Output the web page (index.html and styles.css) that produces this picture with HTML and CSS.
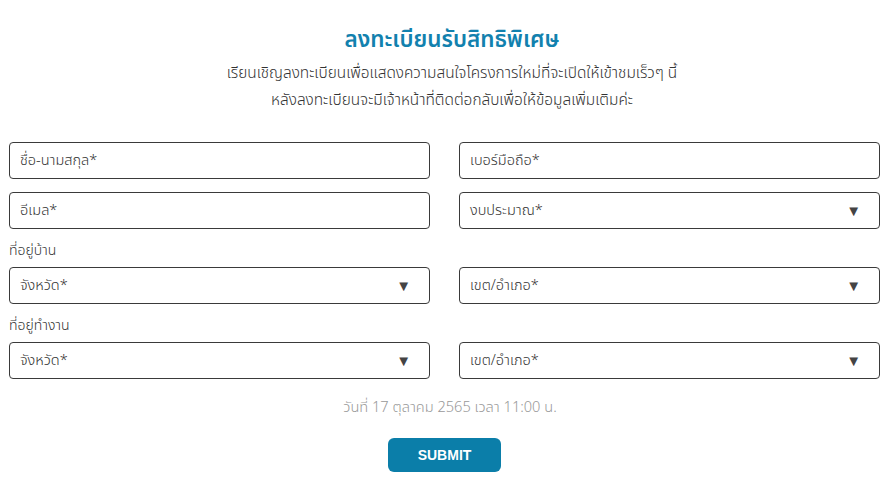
FILE: index.html
```html
<!DOCTYPE html>
<html lang="th">
<head>
  <meta charset="UTF-8">
  <meta name="viewport" content="width=device-width, initial-scale=1.0">
  <title>ลงทะเบียนรับสิทธิพิเศษ</title>
  <link rel="stylesheet" href="styles.css">
</head>
<body>
  <section class="register">
    <header class="head">
      <h1 class="title">ลงทะเบียนรับสิทธิพิเศษ</h1>
      <p class="intro">เรียนเชิญลงทะเบียนเพื่อแสดงความสนใจโครงการใหม่ที่จะเปิดให้เข้าชมเร็วๆ นี้<br>หลังลงทะเบียนจะมีเจ้าหน้าที่ติดต่อกลับเพื่อให้ข้อมูลเพิ่มเติมค่ะ</p>
    </header>

    <form class="form">
      <div class="row">
        <input class="field" type="text" placeholder="ชื่อ-นามสกุล*">
        <input class="field" type="tel" placeholder="เบอร์มือถือ*">
      </div>
      <div class="row">
        <input class="field" type="email" placeholder="อีเมล*">
        <div class="field select">งบประมาณ*<span class="arrow">▼</span></div>
      </div>

      <div class="label">ที่อยู่บ้าน</div>
      <div class="row">
        <div class="field select">จังหวัด*<span class="arrow">▼</span></div>
        <div class="field select">เขต/อำเภอ*<span class="arrow">▼</span></div>
      </div>

      <div class="label">ที่อยู่ทำงาน</div>
      <div class="row">
        <div class="field select">จังหวัด*<span class="arrow">▼</span></div>
        <div class="field select">เขต/อำเภอ*<span class="arrow">▼</span></div>
      </div>

      <p class="date">วันที่ 17 ตุลาคม 2565 เวลา 11:00 น.</p>
      <div class="actions">
        <button class="submit" type="button">SUBMIT</button>
      </div>
    </form>
  </section>
</body>
</html>
```

FILE: styles.css
```css
*, *::before, *::after {
  padding: 0;
  margin: 0;
  box-sizing: border-box;
}

body {
  background: #fff;
  color: #333;
  font-family: "Noto Sans Thai", "Noto Sans", "Liberation Sans", sans-serif;
}

.register {
  padding: 26px 11px 0 9px;
}

.head {
  padding-left: 15px;
  text-align: center;
}

.title {
  color: #1281ae;
  font-size: 22.5px;
  font-weight: 600;
  line-height: 28px;
}

.intro {
  margin-top: 6px;
  font-size: 15.4px;
  font-weight: 300;
  line-height: 27px;
  color: #333;
}

.form {
  margin-top: 28px;
}

.row {
  display: grid;
  grid-template-columns: 1fr 1fr;
  column-gap: 29px;
  margin-bottom: 13px;
}

.field {
  height: 37px;
  border: 1px solid #3a3a3a;
  border-radius: 4px;
  padding: 0 10px;
  font-family: inherit;
  font-size: 14.5px;
  font-weight: 300;
  color: #333;
  background: #fff;
  outline: none;
}

.field::placeholder {
  color: #333;
}

.select {
  display: flex;
  align-items: center;
  justify-content: space-between;
}

.arrow {
  font-family: "DejaVu Sans", sans-serif;
  font-size: 15px;
  color: #444;
  margin-right: 8px;
}

.label {
  font-size: 14px;
  font-weight: 300;
  line-height: 18px;
  margin: 10px 0 7px;
}

.date {
  margin-top: 18px;
  padding-left: 11px;
  text-align: center;
  font-size: 14.6px;
  font-weight: 300;
  color: #999;
}

.actions {
  display: flex;
  justify-content: center;
  margin-top: 19px;
}

.submit {
  width: 113px;
  height: 34px;
  border: 0;
  border-radius: 6px;
  background: #0b7ea9;
  color: #fff;
  font-family: "Liberation Sans", sans-serif;
  font-size: 14px;
  font-weight: 700;
}
```
